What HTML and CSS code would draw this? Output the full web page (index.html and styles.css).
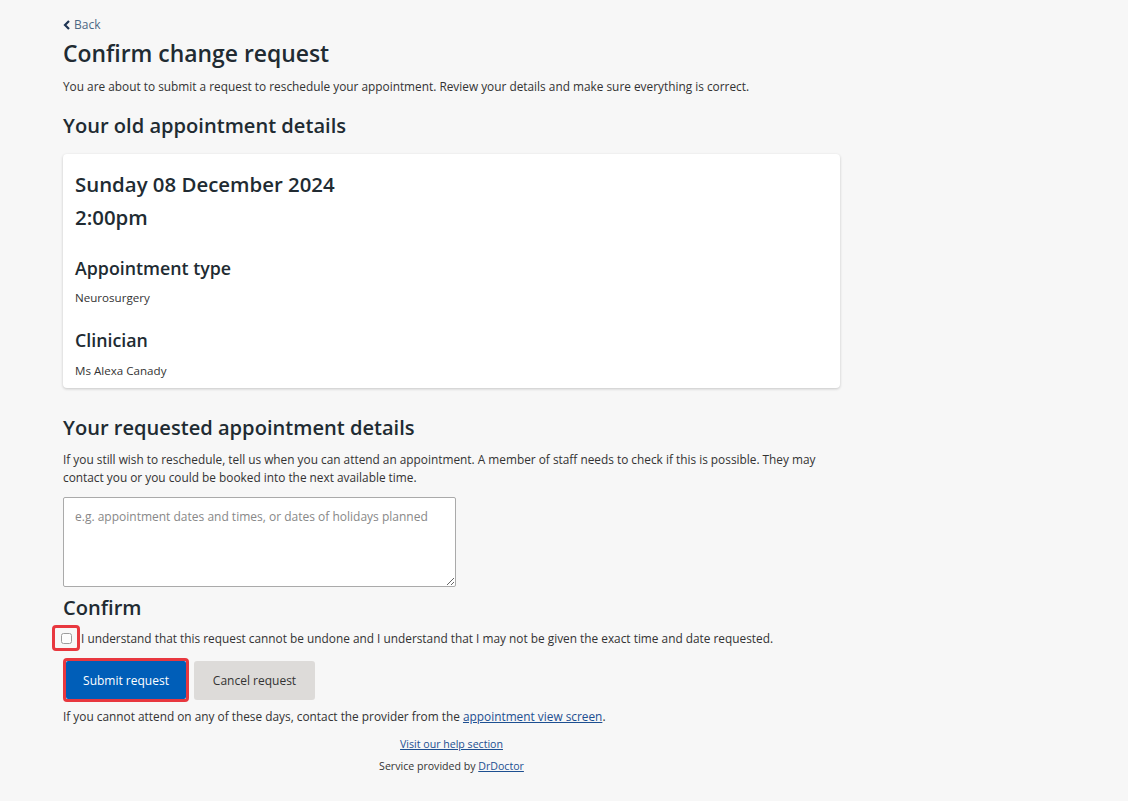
FILE: index.html
```html
<!DOCTYPE html>
<html lang="en">
<head>
<meta charset="utf-8">
<title>Confirm change request</title>
<link rel="stylesheet" href="styles.css">
</head>
<body>
<main class="page">
  <a class="back" href="#"><svg class="chev" width="8" height="10" viewBox="0 0 8 10"><path d="M6 1 L2 5 L6 9" fill="none" stroke="currentColor" stroke-width="2.2"/></svg><span class="back-text">Back</span></a>
  <h1 class="title">Confirm change request</h1>
  <p class="intro">You are about to submit a request to reschedule your appointment. Review your details and make sure everything is correct.</p>

  <h2 class="section">Your old appointment details</h2>
  <div class="card">
    <div class="date">Sunday 08 December 2024</div>
    <div class="time">2:00pm</div>
    <h3 class="label">Appointment type</h3>
    <p class="value">Neurosurgery</p>
    <h3 class="label">Clinician</h3>
    <p class="value value-last">Ms Alexa Canady</p>
  </div>

  <h2 class="section section-req">Your requested appointment details</h2>
  <p class="body">If you still wish to reschedule, tell us when you can attend an appointment. A member of staff needs to check if this is possible. They may contact you or you could be booked into the next available time.</p>
  <textarea class="notes" placeholder="e.g. appointment dates and times, or dates of holidays planned"></textarea>

  <h2 class="section section-confirm">Confirm</h2>
  <label class="check-row">
    <span class="check-outline"><input type="checkbox" class="check"></span>
    <span class="check-text">I understand that this request cannot be undone and I understand that I may not be given the exact time and date requested.</span>
  </label>
  <div class="actions">
    <span class="btn-outline"><button class="btn btn-primary">Submit request</button></span>
    <button class="btn btn-secondary">Cancel request</button>
  </div>
  <p class="body note">If you cannot attend on any of these days, contact the provider from the <a href="#">appointment view screen</a>.</p>

  <footer class="footer">
    <a href="#">Visit our help section</a>
    <p>Service provided by <a href="#">DrDoctor</a></p>
  </footer>
</main>
</body>
</html>
```

FILE: styles.css
```css
html, body {
  margin: 0;
  padding: 0;
  background: #f7f7f7;
}
body {
  font-family: "Open Sans", "Noto Sans", sans-serif;
  color: #212b32;
}
.page {
  width: 777px;
  margin-left: 63px;
  padding-top: 13px;
}
.back {
  display: inline-flex;
  align-items: center;
  gap: 3px;
  font-size: 12px;
  color: #1f3554;
  text-decoration: none;
  line-height: 18px;
}
.back-text { color: #4d6784; }
.chev { display: block; }
.title {
  margin: 3px 0 0;
  font-size: 22.9px;
  font-weight: 600;
  line-height: 32px;
}
.intro {
  margin: 7px 0 0;
  font-size: 11.85px;
  line-height: 18px;
  color: #333;
}
.section {
  margin: 16px 0 0;
  font-size: 20.1px;
  font-weight: 600;
  line-height: 30px;
}
.card {
  margin-top: 13px;
  background: #fff;
  border-radius: 4px;
  box-shadow: 0 1px 3px rgba(0,0,0,0.2);
  padding: 14px 12px 8px;
}
.date, .time {
  font-size: 20.4px;
  font-weight: 600;
  line-height: 33px;
}
.label {
  margin: 21px 0 0;
  font-size: 17.8px;
  font-weight: 600;
  line-height: 26px;
}
.value {
  margin: 8px 0 0;
  font-size: 11.6px;
  line-height: 18px;
  color: #333;
}
.value + .label { margin-top: 20px; }
.value-last { margin-top: 9px; }
.section-req { margin-top: 25px; }
.body {
  margin: 7px 0 0;
  font-size: 11.85px;
  line-height: 18px;
  color: #333;
}
.body a, .footer a { color: #1d4f91; }
.notes {
  display: block;
  box-sizing: border-box;
  margin-top: 11px;
  width: 393px;
  height: 90px;
  padding: 10px 11px;
  border: 1px solid #aaa;
  border-radius: 2px;
  background: #fff;
  font-family: inherit;
  font-size: 12px;
  line-height: 18px;
  color: #333;
  resize: vertical;
}
.notes::placeholder { color: #888; }
.section-confirm { margin-top: 6px; }
.check-row {
  display: flex;
  align-items: center;
  margin-top: 2px;
  margin-left: -11px;
  font-size: 11.85px;
  color: #333;
}
.check-outline {
  display: flex;
  align-items: center;
  justify-content: center;
  box-sizing: border-box;
  width: 28px;
  height: 26px;
  border: 3px solid #e8383f;
  border-radius: 4px;
  margin-right: 1px;
}
.check {
  margin: 0;
  width: 11px;
  height: 11px;
  opacity: 0.7;
}
.actions {
  display: flex;
  align-items: center;
  gap: 5px;
  margin-top: 7px;
}
.btn-outline {
  display: flex;
  box-sizing: border-box;
  border: 3px solid #e8383f;
  border-radius: 4px;
}
.btn {
  font-family: inherit;
  font-size: 12px;
  border: none;
  border-radius: 2px;
  height: 39px;
  padding: 0;
  cursor: pointer;
}
.btn-primary {
  width: 120px;
  background: #005eb8;
  color: #fff;
  height: 38px;
}
.btn-secondary {
  width: 121px;
  background: #dddbd9;
  color: #333;
  border-radius: 3px;
}
.note { margin-top: 5px; }
.footer {
  margin-top: 11px;
  text-align: center;
  font-size: 10.6px;
  line-height: 16px;
  color: #333;
}
.footer p { margin: 6px 0 0; }
```
